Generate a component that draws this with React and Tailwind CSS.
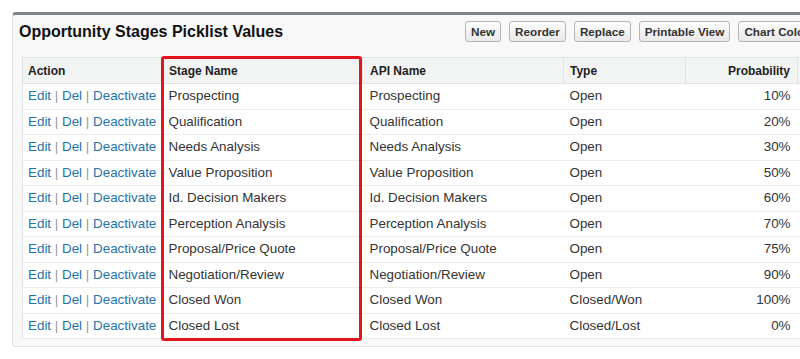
import React from 'react';

const stages = [
    { name: 'Prospecting', type: 'Open', prob: '10%' },
    { name: 'Qualification', type: 'Open', prob: '20%' },
    { name: 'Needs Analysis', type: 'Open', prob: '30%' },
    { name: 'Value Proposition', type: 'Open', prob: '50%' },
    { name: 'Id. Decision Makers', type: 'Open', prob: '60%' },
    { name: 'Perception Analysis', type: 'Open', prob: '70%' },
    { name: 'Proposal/Price Quote', type: 'Open', prob: '75%' },
    { name: 'Negotiation/Review', type: 'Open', prob: '90%' },
    { name: 'Closed Won', type: 'Closed/Won', prob: '100%' },
    { name: 'Closed Lost', type: 'Closed/Lost', prob: '0%' },
];

const buttons = ['New', 'Reorder', 'Replace', 'Printable View', 'Chart Colors'];

const Btn = ({ label }) => (
    <button className="h-[21px] px-[5px] rounded-[3px] border border-[#b5b5b5] bg-gradient-to-b from-[#fdfdfd] to-[#e9e9e9] text-[11.7px] font-bold text-[#333] leading-none whitespace-nowrap">
        {label}
    </button>
);

export default function App() {
    return (
        <div className="w-[800px] h-[359px] overflow-hidden bg-white" style={{ fontFamily: 'Arial, "Liberation Sans", sans-serif' }}>
            <div className="ml-[12px] mt-[12px] w-[830px] h-[335px] rounded-[4px] border border-[#e2e2e2] border-t-[3px] border-t-[#7a8590] bg-[#f8f8f8]">
                {/* Title row */}
                <div className="flex items-center h-[33px] pl-[6px]">
                    <h2 className="text-[16px] font-bold text-[#111] w-[446px]">Opportunity Stages Picklist Values</h2>
                    <div className="flex gap-[8px]">
                        {buttons.map((b) => (
                            <Btn key={b} label={b} />
                        ))}
                    </div>
                </div>

                {/* Picklist table */}
                <div className="relative ml-[9px] mt-[9px] text-[13.4px] text-[#333]">
                    <table className="border-collapse table-fixed w-[820px]">
                        <colgroup>
                            <col className="w-[140px]" />
                            <col className="w-[200px]" />
                            <col className="w-[201px]" />
                            <col className="w-[122px]" />
                            <col className="w-[112px]" />
                            <col />
                        </colgroup>
                        <thead>
                            <tr className="h-[26px] bg-[#f2f3f3] border-t border-[#e0e3e5] border-b border-b-[#e0e3e5]">
                                <th className="text-left font-bold text-[12px] text-[#222] pl-[5px] border-l border-[#e0e3e5]">Action</th>
                                <th className="text-left font-bold text-[12px] text-[#222] pl-[6px] border-l border-[#e0e3e5]">Stage Name</th>
                                <th className="text-left font-bold text-[12px] text-[#222] pl-[7px] border-l border-[#e0e3e5]">API Name</th>
                                <th className="text-left font-bold text-[12px] text-[#222] pl-[6px] border-l border-[#e0e3e5]">Type</th>
                                <th className="text-right font-bold text-[12px] text-[#222] pr-[7px] border-l border-[#e0e3e5]">Probability</th>
                                <th className="border-l border-[#e0e3e5]"></th>
                            </tr>
                        </thead>
                        <tbody className="bg-white">
                            {stages.map((s) => (
                                <tr key={s.name} className="h-[25.5px] border-b border-[#ececec]">
                                    <td className="pl-[5px] whitespace-nowrap text-[#2574a9] border-l border-[#e0e3e5]">
                                        Edit <span className="text-[#999]">|</span> Del <span className="text-[#999]">|</span> Deactivate
                                    </td>
                                    <td className="pl-[6px] whitespace-nowrap">{s.name}</td>
                                    <td className="pl-[7px] whitespace-nowrap">{s.name}</td>
                                    <td className="pl-[6px] whitespace-nowrap">{s.type}</td>
                                    <td className="pr-[7px] text-right whitespace-nowrap">{s.prob}</td>
                                    <td></td>
                                </tr>
                            ))}
                        </tbody>
                    </table>
                    {/* highlight around the Stage Name column */}
                    <div className="absolute left-[139px] top-[-1px] w-[201px] h-[285px] border-[3px] border-[#e3141b] rounded-[3px] pointer-events-none" />
                </div>
            </div>
        </div>
    );
}
